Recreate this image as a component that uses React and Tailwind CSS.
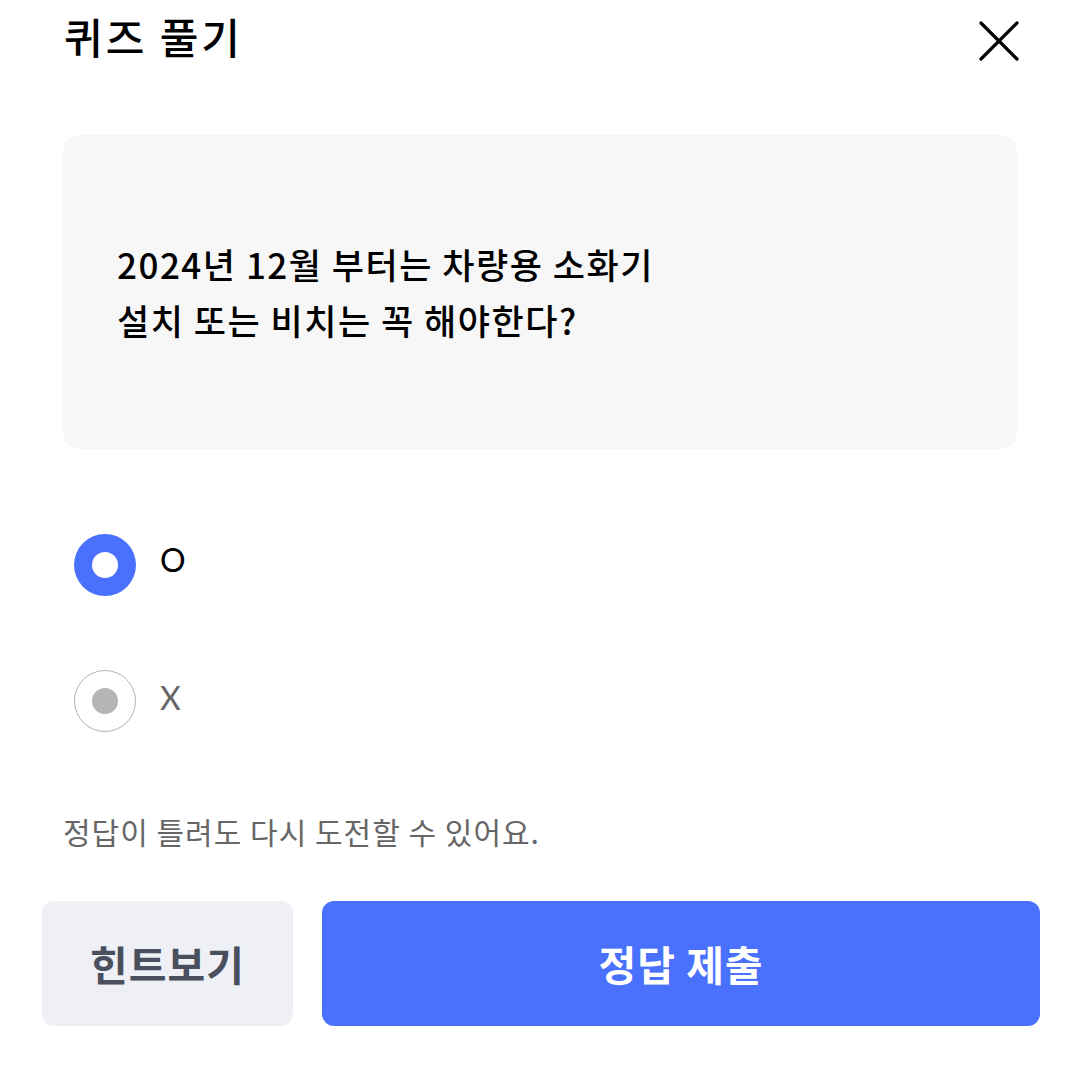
export default function App() {
  return (
    <div className="w-[1080px] h-[1066px] bg-white font-['Noto_Sans_CJK_KR','Noto_Sans',sans-serif] text-black">
      <div className="flex items-center justify-between h-[80px] pl-[64px] pr-[60px]">
        <div className="text-[42px] leading-none font-medium tracking-[3px] -mt-[8px]">퀴즈 풀기</div>
        <svg width="42" height="42" viewBox="0 0 42 42" className="mt-[2px]">
          <path d="M3 3 L39 39 M39 3 L3 39" stroke="#000" strokeWidth="3.2" strokeLinecap="round" />
        </svg>
      </div>
      <div className="mx-[63px] mt-[55px] h-[314px] rounded-[16px] bg-[#f7f7f7] pl-[54px] flex items-center">
        <div className="text-[35px] leading-[56px] font-normal tracking-[1.5px] font-['Noto_Sans_CJK_KR_Medium','Noto_Sans_KR_Medium','Noto_Sans_CJK_KR',sans-serif]">
          2024년 12월 부터는 차량용 소화기<br />설치 또는 비치는 꼭 해야한다?
        </div>
      </div>
      <div className="mt-[85px] pl-[74px] flex flex-col gap-[74px]">
        <div className="flex items-center gap-[24px] h-[62px]">
          <div className="w-[62px] h-[62px] rounded-full bg-[#4a70fe] flex items-center justify-center">
            <div className="w-[26px] h-[26px] rounded-full bg-white" />
          </div>
          <span className="text-[32px] leading-none font-['Lato','Noto_Sans',sans-serif] -mt-[10px]">O</span>
        </div>
        <div className="flex items-center gap-[24px] h-[62px]">
          <div className="w-[62px] h-[62px] rounded-full border-[1.5px] border-[#b3b3b3] flex items-center justify-center">
            <div className="w-[26px] h-[26px] rounded-full bg-[#b5b5b5]" />
          </div>
          <span className="text-[32px] leading-none text-[#666] font-['Lato','Noto_Sans',sans-serif] -mt-[6px]">X</span>
        </div>
      </div>
      <div className="mt-[78px] pl-[63px] text-[30px] leading-[42px] text-[#666] tracking-[1px]">
        정답이 틀려도 다시 도전할 수 있어요.
      </div>
      <div className="mt-[49px] pl-[42px] flex gap-[29px]">
        <div className="w-[251px] h-[125px] rounded-[12px] bg-[#eef0f5] flex items-center justify-center text-[41px] font-semibold text-[#4a4f5e] tracking-[1px]">
          힌트보기
        </div>
        <div className="w-[718px] h-[125px] rounded-[12px] bg-[#4a70fe] flex items-center justify-center text-[41px] font-semibold text-white tracking-[1px]">
          정답 제출
        </div>
      </div>
    </div>
  );
}
